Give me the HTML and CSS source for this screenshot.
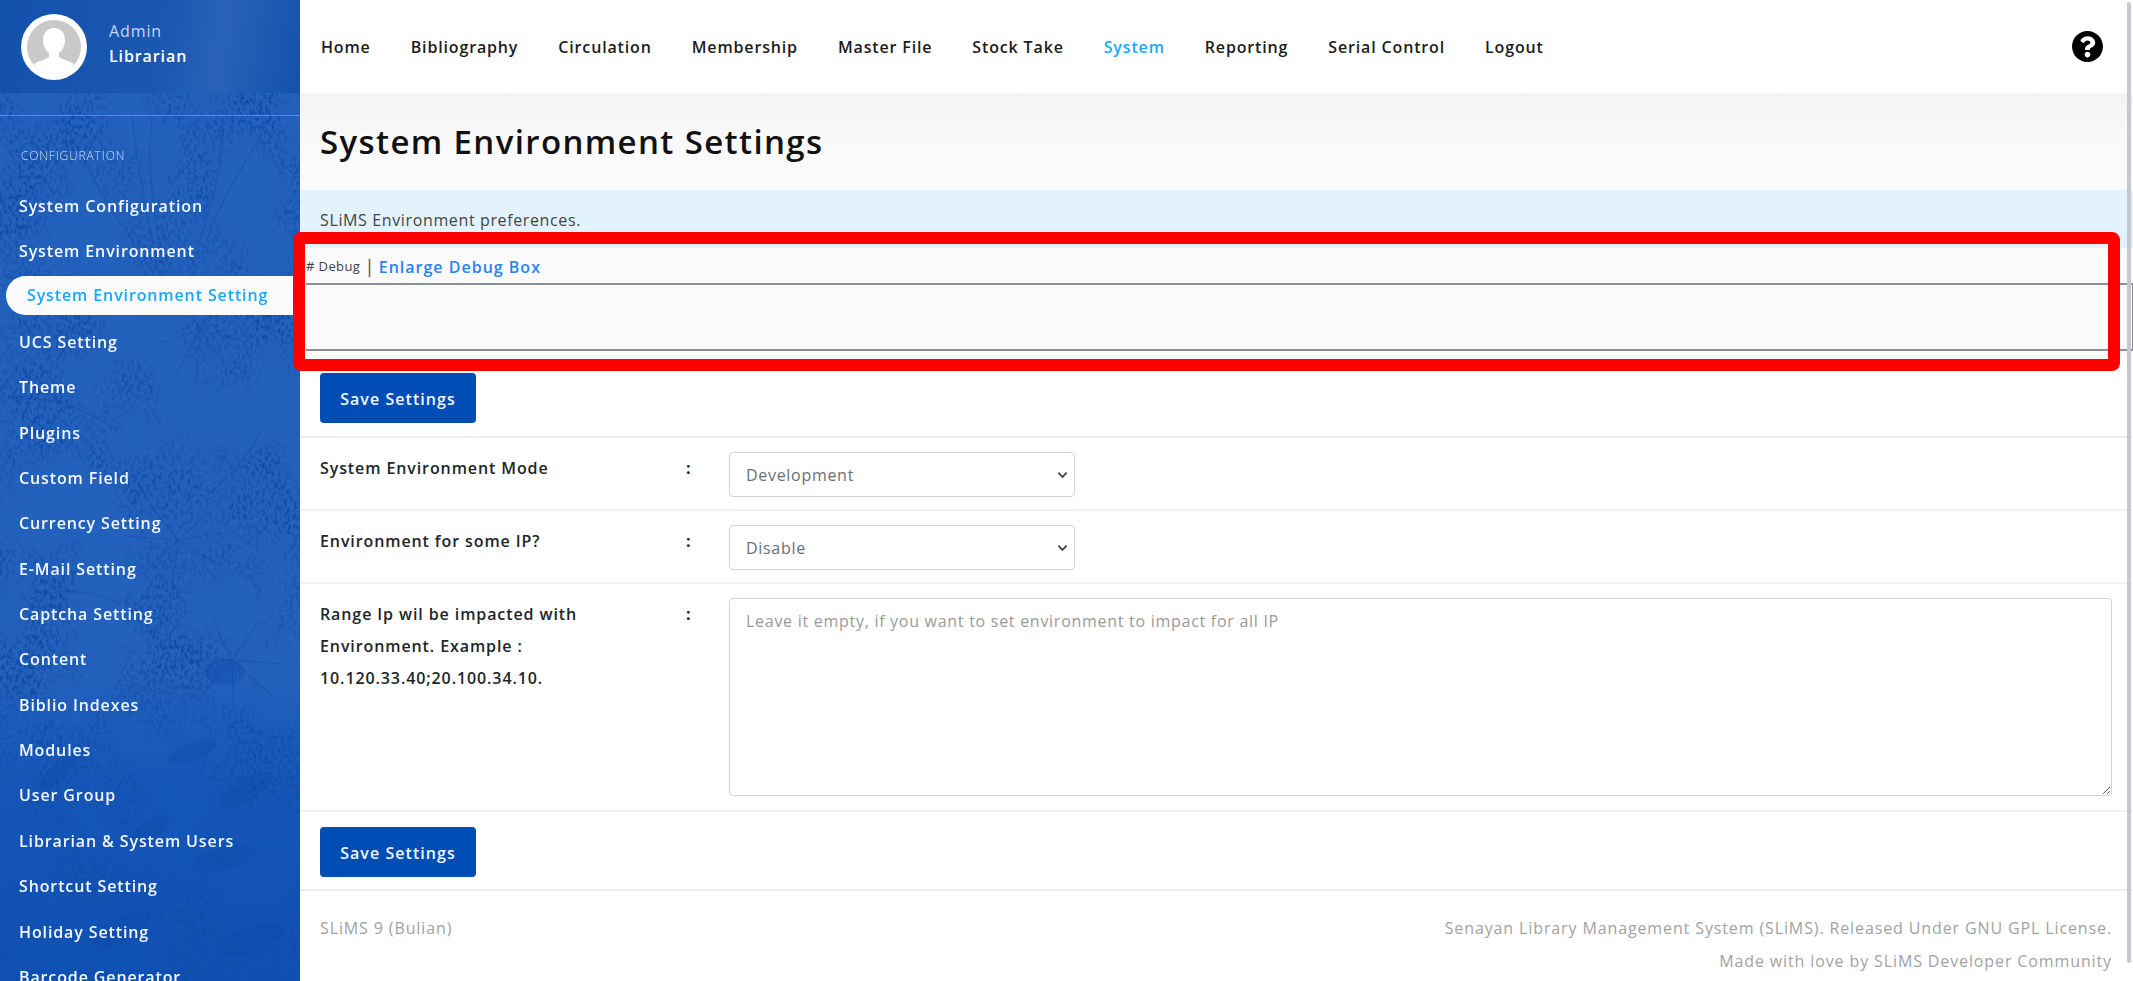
FILE: index.html
```html
<!DOCTYPE html>
<html lang="en">
<head>
<meta charset="utf-8">
<title>System Environment Settings</title>
<link rel="stylesheet" href="styles.css">
</head>
<body>
<div class="app">
  <aside class="sidebar">
    <svg class="texture" width="300" height="981" aria-hidden="true">
      <defs>
        <filter id="bark" x="0" y="0" width="100%" height="100%" color-interpolation-filters="sRGB">
          <feTurbulence type="fractalNoise" baseFrequency="0.014 0.011" numOctaves="3" seed="7" result="coarse"/>
          <feTurbulence type="fractalNoise" baseFrequency="0.32 0.2" numOctaves="2" seed="21" result="fine"/>
          <feColorMatrix in="coarse" type="matrix" values="0 0 0 0 0  0 0 0 0 0  0 0 0 0 0  3.4 0 0 0 -1.35" result="mask"/>
          <feColorMatrix in="fine" type="matrix" values="0 0 0 0 0.07  0 0 0 0 0.3  0 0 0 0 0.66  5 0 0 0 -2.3" result="fibre"/>
          <feComposite in="fibre" in2="mask" operator="in"/>
        </filter>
      </defs>
      <rect width="300" height="981" filter="url(#bark)"/>
      <g class="branches">
        <path d="M132 116c6 60 18 110 28 165M152 116c-6 50 2 100 12 150M222 116c4 50-14 95-30 150M60 116c22 40 40 80 76 130M268 120c-18 40-44 70-60 118"/>
        <path d="M200 330l-24 44M200 330l30 40M200 330l-4 52M200 330l46 12M200 330l-44 14M200 330l26-30M200 330l-18-34"/>
        <path d="M178 540l-36 34M178 540l44 26M178 540l-6 50M178 540l52-8M178 540l-52-4M178 540l34-30M178 540l-26-32"/>
        <path d="M232 660l-34 40M232 660l40 36M232 660l2 56M232 660l50 4M232 660l-50 2M232 660l28-40M232 660l-20-42"/>
        <path d="M20 400c34-6 66 10 96 30M18 300c30 14 60 20 84 44M30 600c24-12 60-12 90 4M262 430c-16 28-30 46-54 64"/>
      </g>
      <g class="scales">
        <ellipse cx="225" cy="672" rx="20" ry="13"/>
        <ellipse cx="192" cy="752" rx="26" ry="9" transform="rotate(-20 192 752)"/>
        <ellipse cx="246" cy="790" rx="30" ry="10" transform="rotate(-30 246 790)"/>
        <ellipse cx="150" cy="830" rx="24" ry="9" transform="rotate(-35 150 830)"/>
        <ellipse cx="224" cy="858" rx="32" ry="11" transform="rotate(-15 224 858)"/>
        <ellipse cx="60" cy="770" rx="28" ry="8" transform="rotate(-40 60 770)"/>
        <ellipse cx="120" cy="930" rx="34" ry="12" transform="rotate(-30 120 930)"/>
        <ellipse cx="250" cy="940" rx="36" ry="12" transform="rotate(-20 250 940)"/>
      </g>
    </svg>
    <div class="profile">
      <div class="avatar">
        <svg viewBox="0 0 66 66" width="66" height="66" aria-hidden="true">
          <circle cx="33" cy="33" r="33" fill="#fff"/>
          <circle cx="33" cy="33" r="27" fill="#c9c9c9"/>
          <path d="M33 14c-7 0-11 5-11 12 0 6 3 11 6 13v4c-4 3-11 4-15 7 5 7 12 10 20 10s15-3 20-10c-4-3-11-4-15-7v-4c3-2 6-7 6-13 0-7-4-12-11-12z" fill="#fff"/>
        </svg>
      </div>
      <div class="who">
        <div class="who-role">Admin</div>
        <div class="who-name">Librarian</div>
      </div>
    </div>
    <div class="side-rule"></div>
    <div class="side-heading">CONFIGURATION</div>
    <nav class="side-menu">
      <a class="side-link">System Configuration</a>
      <a class="side-link">System Environment</a>
      <a class="side-link side-link-active">System Environment Setting</a>
      <a class="side-link">UCS Setting</a>
      <a class="side-link">Theme</a>
      <a class="side-link">Plugins</a>
      <a class="side-link">Custom Field</a>
      <a class="side-link">Currency Setting</a>
      <a class="side-link">E-Mail Setting</a>
      <a class="side-link">Captcha Setting</a>
      <a class="side-link">Content</a>
      <a class="side-link">Biblio Indexes</a>
      <a class="side-link">Modules</a>
      <a class="side-link">User Group</a>
      <a class="side-link">Librarian &amp; System Users</a>
      <a class="side-link">Shortcut Setting</a>
      <a class="side-link">Holiday Setting</a>
      <a class="side-link">Barcode Generator</a>
    </nav>
  </aside>

  <main class="main">
    <header class="topbar">
      <nav class="top-menu">
        <a class="top-link">Home</a>
        <a class="top-link">Bibliography</a>
        <a class="top-link">Circulation</a>
        <a class="top-link">Membership</a>
        <a class="top-link">Master File</a>
        <a class="top-link">Stock Take</a>
        <a class="top-link top-link-active">System</a>
        <a class="top-link">Reporting</a>
        <a class="top-link">Serial Control</a>
        <a class="top-link">Logout</a>
      </nav>
      <svg class="help" viewBox="8 8 496 496" width="31" height="31" aria-hidden="true">
        <path d="M504 256c0 136.997-111.043 248-248 248S8 392.997 8 256C8 119.083 119.043 8 256 8s248 111.083 248 248zM262.655 90c-54.497 0-89.255 22.957-116.549 63.758-3.536 5.286-2.353 12.415 2.715 16.258l34.699 26.31c5.205 3.947 12.621 3.008 16.665-2.122 17.864-22.658 30.113-35.797 57.303-35.797 20.429 0 45.698 13.148 45.698 32.958 0 14.976-12.363 22.667-32.534 33.976C247.128 238.528 216 254.941 216 296v4c0 6.627 5.373 12 12 12h56c6.627 0 12-5.373 12-12v-1.333c0-28.462 83.186-29.647 83.186-106.667 0-58.002-60.165-102-116.531-102zM256 338c-25.365 0-46 20.635-46 46 0 25.364 20.635 46 46 46s46-20.636 46-46c0-25.365-20.635-46-46-46z"/>
      </svg>
    </header>

    <section class="title-block">
      <h1 class="title">System Environment Settings</h1>
    </section>
    <section class="info-band">SLiMS Environment preferences.</section>

    <section class="debug">
      <div class="debug-head">
        <span class="debug-label"># Debug</span>
        <span class="debug-sep">|</span>
        <a class="debug-link">Enlarge Debug Box</a>
      </div>
      <div class="debug-frame"></div>
    </section>

    <div class="actions"><button class="btn" type="button">Save Settings</button></div>

    <form class="form">
      <div class="row row-select">
        <div class="row-label">System Environment Mode</div>
        <div class="row-colon">:</div>
        <div class="select"><span>Development</span><svg class="chev" viewBox="0 0 12 8" width="11" height="8" aria-hidden="true"><path d="M1.5 1.5 6 6l4.5-4.5" fill="none" stroke="#444" stroke-width="2"/></svg></div>
      </div>
      <div class="row row-select">
        <div class="row-label">Environment for some IP?</div>
        <div class="row-colon">:</div>
        <div class="select"><span>Disable</span><svg class="chev" viewBox="0 0 12 8" width="11" height="8" aria-hidden="true"><path d="M1.5 1.5 6 6l4.5-4.5" fill="none" stroke="#444" stroke-width="2"/></svg></div>
      </div>
      <div class="row row-text">
        <div class="row-label row-label-multi">Range Ip wil be impacted with Environment. Example : 10.120.33.40;20.100.34.10.</div>
        <div class="row-colon">:</div>
        <textarea class="area" placeholder="Leave it empty, if you want to set environment to impact for all IP"></textarea>
      </div>
    </form>

    <div class="actions actions-bottom"><button class="btn" type="button">Save Settings</button></div>

    <footer class="footer">
      <div class="foot-left">SLiMS 9 (Bulian)</div>
      <div class="foot-right">Senayan Library Management System (SLiMS). Released Under GNU GPL License.<br>Made with love by SLiMS Developer Community</div>
    </footer>
  </main>
</div>
<div class="highlight"></div>
<div class="scrollbar"></div>
</body>
</html>
```
FILE: styles.css
```css
* { box-sizing: border-box; }
html, body { margin: 0; height: 981px; overflow: hidden; }
body {
  font-family: "Open Sans", "Lato", sans-serif;
  font-size: 16px;
  color: #212529;
  background: #fff;
}
.app { display: flex; height: 981px; overflow: hidden; }

/* Sidebar */
.sidebar {
  position: relative;
  flex: 0 0 300px;
  height: 981px;
  overflow: hidden;
  color: #fff;
  background: linear-gradient(180deg, #2362bc 0%, #2362bc 68%, #1557b8 80%, #0f50b3 100%);
}
.texture { position: absolute; inset: 0; }
.branches { fill: none; stroke: #134fa8; stroke-width: 1.2; opacity: .55; }
.scales { fill: #0d4aa8; opacity: .35; }
.profile {
  position: relative;
  height: 93px;
  display: flex;
  align-items: center;
  gap: 22px;
  padding: 0 0 0 21px;
  background: linear-gradient(100deg, #1352ac 0%, #1a58b2 55%, #2a62b8 72%, #1451ab 100%);
}
.avatar { width: 66px; height: 66px; }
.avatar svg { display: block; }
.who { line-height: 25px; margin-top: -6px; letter-spacing: .9px; }
.who-role { font-weight: 400; color: #c9d8ee; }
.who-name { font-weight: 600; }
.side-rule { position: relative; margin-top: 22px; height: 1px; background: rgba(255,255,255,.28); }
.side-heading {
  position: relative;
  margin: 32px 0 0 21px;
  font-size: 12px;
  font-weight: 300;
  line-height: 15px;
  letter-spacing: .85px;
  color: rgba(255,255,255,.8);
}
.side-menu { position: relative; display: flex; flex-direction: column; margin-top: 21px; }
.side-link {
  display: block;
  height: 45.35px;
  line-height: 45px;
  padding-left: 19px;
  font-weight: 600;
  letter-spacing: .88px;
  white-space: nowrap;
  color: #f4f7fc;
}
.side-link-active {
  height: 39px;
  line-height: 39px;
  margin: 1px 0 5.35px 6px;
  padding-left: 21px;
  color: #1aa7ff;
  background: #fafafa;
  border-radius: 20px 0 0 20px;
}

/* Main */
.main { flex: 1; min-width: 0; }
.topbar {
  height: 93px;
  display: flex;
  align-items: center;
  justify-content: space-between;
  padding: 0 30px 0 21px;
  background: #fff;
}
.top-menu { display: flex; gap: 40px; }
.top-link { font-weight: 600; letter-spacing: .85px; color: #1c1c1c; white-space: nowrap; }
.top-link-active { color: #1aa7ff; }
.help { display: block; fill: #000; }
.title-block {
  height: 97px;
  padding: 0 20px;
  display: flex;
  align-items: center;
  background: linear-gradient(180deg, #f3f3f3 0%, #f9f9f9 45%, #fafafa 100%);
}
.title { margin: 0; font-size: 33px; font-weight: 600; letter-spacing: 1.37px; color: #111; }
.info-band { height: 58px; padding: 20px 20px 0; background: #e3f3fd; color: #444; line-height: 20px; letter-spacing: .63px; }
.debug { height: 110px; background: #fafafa; }
.debug-head { height: 37px; display: flex; align-items: center; padding-left: 6px; white-space: nowrap; }
.debug-label { font-size: 13px; letter-spacing: .4px; color: #444; margin-top: -2px; }
.debug-sep { margin: -2px 4px 0 4px; font-size: 19px; line-height: 20px; color: #555; }
.debug-link { margin-top: 1px; font-weight: 600; letter-spacing: 1px; color: #2684f0; }
.debug-frame {
  height: 68px;
  margin-top: -2px;
  margin-left: 6px;
  border: 2px solid #8b9097;
  border-width: 2px 1px 2px 0;
  background: #fafafa;
}
.actions { height: 80px; padding: 15px 20px 0; border-bottom: 2px solid #eeeeee; }
.actions-bottom { height: 79px; }
.btn {
  width: 156px;
  height: 50px;
  padding: 2px 0 0;
  border: 0;
  border-radius: 4px;
  background: #004db6;
  color: #f2f6fc;
  font: 600 16px "Open Sans", sans-serif;
  letter-spacing: 1.05px;
}
.form { display: block; }
.row { display: flex; border-bottom: 2px solid #f1f1f1; padding-left: 20px; }
.row-select { height: 73px; padding-top: 14px; }
.row-text { height: 228px; padding-top: 14px; }
.row-label { flex: 0 0 366px; font-weight: 600; letter-spacing: .9px; line-height: 32px; color: #212529; }
.row-label-multi { padding-right: 60px; }
.row-colon { flex: 0 0 43px; font-weight: 700; line-height: 32px; }
.select {
  display: flex;
  align-items: center;
  justify-content: space-between;
  width: 346px;
  height: 45px;
  padding: 0 6px 0 16px;
  border: 1px solid #ced4da;
  border-radius: 4px;
  color: #6b7076;
  letter-spacing: .7px;
  background: #fff;
}
.area {
  display: block;
  width: 1383px;
  height: 198px;
  padding: 11px 16px;
  border: 1px solid #ced4da;
  border-radius: 4px;
  font: 16px "Open Sans", sans-serif;
  letter-spacing: .72px;
  resize: both;
  outline: 0;
}
.area::placeholder { color: #9a9a9a; opacity: 1; }
.footer {
  display: flex;
  justify-content: space-between;
  padding: 21px 21px 0 20px;
  line-height: 33px;
  letter-spacing: .88px;
  color: #a2a2a2;
}
.foot-right { text-align: right; }

/* Overlays */
.highlight {
  position: absolute;
  left: 293px;
  top: 232px;
  width: 1827px;
  height: 139px;
  border: 12px solid #ff0000;
  border-radius: 8px;
}
.scrollbar {
  position: absolute;
  left: 2127px;
  top: 2px;
  width: 4px;
  height: 961px;
  border-radius: 2px;
  background: #c6c7cf;
}
```
